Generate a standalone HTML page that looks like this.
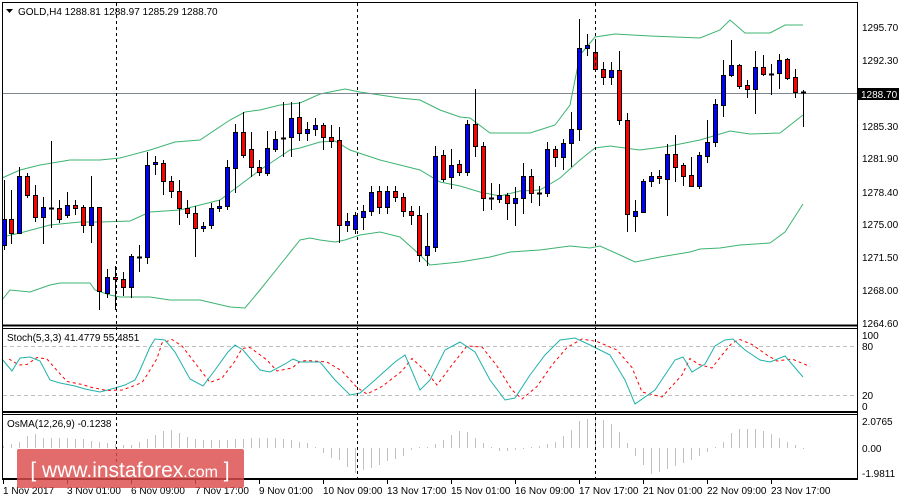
<!DOCTYPE html>
<html><head><meta charset="utf-8">
<style>
html,body{margin:0;padding:0;background:#fff;width:900px;height:500px;overflow:hidden}
svg{display:block;font-family:"Liberation Sans","DejaVu Sans",sans-serif}
</style></head>
<body>
<svg id="s" width="900" height="500" viewBox="0 0 900 500" xmlns="http://www.w3.org/2000/svg">
<rect width="900" height="500" fill="#fff"/>
<g id="bands" fill="none" stroke="#3cb371" stroke-width="1">
<polyline points="2,178 20,170 40,165 70,160 100,160 120,158 150,150 175,142 200,140 230,120 245,112 260,110 280,105 300,103 320,94 345,89 360,92 380,95 400,98 420,100 440,110 460,117 470,118 490,133 510,133 530,133 555,125 570,105 580,55 595,37 615,34 650,36 700,38 720,30 730,20 745,33 770,33 785,25 803,25"/>
<polyline points="2,237 20,233 50,225 80,222 100,222 130,221 150,212 180,210 220,200 240,185 260,170 275,160 290,150 300,148 320,142 335,141 350,150 380,160 400,165 420,170 440,182 460,186 480,192 500,196 520,191 540,190 560,178 580,160 595,148 610,146 640,150 670,146 700,140 730,131 750,134 780,133 803,115"/>
<polyline points="2,300 10,290 30,292 50,285 60,283 90,283 95,290 110,295 120,297 150,297 170,300 200,300 230,307 245,308 260,290 280,265 300,240 310,238 320,240 335,242 345,240 360,235 380,232 400,237 420,255 430,265 460,262 490,257 510,252 540,250 570,246 590,248 600,246 620,255 635,262 660,257 690,252 700,249 720,248 740,245 770,243 785,232 803,204"/>
</g>
<line x1="2" y1="93.5" x2="857" y2="93.5" stroke="#808890" stroke-width="1"/>
<g id="candles"></g>
<g id="stoch" fill="none">
<line x1="3" y1="346.5" x2="857" y2="346.5" stroke="#c0c0c0" stroke-dasharray="4,3"/>
<line x1="3" y1="395.5" x2="857" y2="395.5" stroke="#c0c0c0" stroke-dasharray="4,3"/>
<polyline id="sig" stroke="#ff0000" stroke-dasharray="3,3" points=""/>
<polyline id="main" stroke="#20b2aa" points="2,359 12,371 20,358 30,357 40,361 50,380 60,383 75,386 85,389 100,392 115,388 125,385 135,380 140,370 150,347 155,339 165,340 175,352 190,379 203,386 215,370 228,352 235,345 243,350 260,370 270,372 285,364 293,359 300,362 320,362 335,380 350,395 360,393 375,380 395,362 405,355 420,390 430,380 445,350 460,342 475,352 490,380 505,400 515,398 530,375 545,355 560,340 575,338 590,345 610,355 625,380 635,404 655,390 675,360 683,357 692,372 705,364 715,346 725,340 733,339 745,350 760,360 770,362 785,356 803,377"/>
</g>
<g id="osma" stroke="#c0c0c0" stroke-width="1"></g>
<g stroke="#000" fill="none" stroke-width="1">
<line x1="2.5" y1="2" x2="2.5" y2="479"/>
<line x1="857.5" y1="2" x2="857.5" y2="479"/>
<line x1="2" y1="2.5" x2="858" y2="2.5"/>
<line x1="2" y1="325.5" x2="858" y2="325.5" stroke-width="2"/>
<line x1="2" y1="328.5" x2="858" y2="328.5"/>
<line x1="2" y1="412" x2="858" y2="412" stroke-width="2"/>
<line x1="2" y1="414.5" x2="858" y2="414.5"/>
<line x1="2" y1="479" x2="858" y2="479" stroke-width="2"/>
</g>
<g stroke="#000" stroke-dasharray="3,3">
<line x1="116.5" y1="3" x2="116.5" y2="479"/>
<line x1="357.5" y1="3" x2="357.5" y2="479"/>
<line x1="595.5" y1="3" x2="595.5" y2="479"/>
</g>
<g font-size="10" fill="#000">
<path d="M6 9 L13 9 L9.5 13 Z" fill="#000"/>
<text x="18" y="15">GOLD,H4  1288.81 1288.97 1285.29 1288.70</text>
<text x="7" y="341">Stoch(5,3,3) 41.4779 55.4851</text>
<text x="7" y="427">OsMA(12,26,9) -0.1238</text>
</g>
<g font-size="10" fill="#000" id="ylab">
<text x="862" y="31">1295.70</text>
<text x="862" y="64">1292.30</text>
<rect x="858" y="88" width="41" height="12" fill="#000"/>
<text x="861" y="98" fill="#fff">1288.70</text>
<text x="862" y="130">1285.30</text>
<text x="862" y="162">1281.90</text>
<text x="862" y="196">1278.40</text>
<text x="862" y="228">1275.00</text>
<text x="862" y="261">1271.50</text>
<text x="862" y="294">1268.00</text>
<text x="862" y="327">1264.60</text>
<text x="862" y="339">100</text>
<text x="862" y="350">80</text>
<text x="862" y="399">20</text>
<text x="862" y="410">0</text>
<text x="862" y="425">2.0765</text>
<text x="862" y="452">0.00</text>
<text x="862" y="477">-1.9811</text>
</g>
<g id="xlab" font-size="10" fill="#000"></g>
<rect x="17" y="449" width="227" height="39" rx="2" fill="#dc4b4b" fill-opacity="0.82"/>
<text x="130" y="477" text-anchor="middle" font-size="21" fill="#fff">[  www.instaforex<tspan font-size="16">.com</tspan> ]</text>
</svg>
<script>
var NS="http://www.w3.org/2000/svg";
function el(p,t,a){var e=document.createElementNS(NS,t);for(var k in a)e.setAttribute(k,a[k]);p.appendChild(e);return e;}
var C=[[4,'b',219,245,180,250],[11,'r',219,233,190,244],[19,'b',176,233,167,234],[27,'r',176,195,173,198],[35,'r',195,217,185,222],[43,'b',207,217,197,244],[51,'d',208,208,141,228],[59,'r',208,219,200,223],[67,'b',205,215,192,218],[75,'r',205,208,200,215],[83,'r',207,225,205,233],[91,'b',207,225,176,243],[99,'r',207,291,207,310],[107,'b',277,293,269,298],[115,'r',277,279,266,310],[123,'r',279,287,272,296],[131,'b',256,287,254,298],[139,'d',257,257,245,272],[147,'b',165,257,152,264],[155,'b',162,164,156,175],[163,'r',163,181,160,195],[171,'r',181,191,176,198],[179,'r',191,208,180,225],[187,'r',208,213,200,218],[195,'r',213,228,206,257],[203,'b',226,228,222,232],[211,'b',208,225,203,229],[219,'b',206,208,200,212],[227,'b',167,206,160,210],[235,'b',132,168,124,193],[243,'r',132,155,112,158],[251,'r',149,167,132,177],[259,'r',167,172,160,176],[267,'b',148,173,131,176],[275,'b',139,149,131,152],[283,'d',138,138,102,157],[291,'b',118,137,102,157],[299,'r',117,133,102,141],[307,'b',129,133,122,141],[315,'b',125,129,118,136],[323,'r',125,137,123,150],[331,'r',137,141,125,148],[339,'r',140,225,127,243],[347,'b',221,225,213,232],[355,'b',215,229,212,234],[363,'b',211,217,205,230],[371,'b',192,211,186,216],[379,'r',191,207,186,214],[387,'b',191,207,186,214],[395,'r',191,197,186,202],[403,'r',197,211,193,217],[411,'r',211,215,206,225],[419,'r',215,255,206,262],[427,'b',246,255,213,266],[435,'b',156,247,146,252],[443,'r',155,179,150,182],[451,'b',165,177,149,189],[459,'r',164,172,160,176],[467,'b',124,172,120,176],[475,'r',124,146,89,157],[483,'r',146,198,142,211],[491,'d',198,198,183,210],[499,'b',195,199,184,203],[507,'r',195,203,193,220],[515,'b',198,203,187,226],[523,'b',176,198,163,214],[531,'r',176,193,169,203],[539,'d',193,193,186,206],[547,'b',149,193,142,197],[555,'r',149,157,146,167],[563,'b',143,157,139,170],[571,'b',129,143,112,167],[579,'b',48,129,19,141],[587,'b',45,48,34,56],[595,'r',52,69,39,72],[603,'r',69,77,62,85],[611,'b',70,77,62,85],[619,'r',70,120,51,125],[627,'r',120,214,113,232],[635,'b',211,216,200,232],[643,'b',181,212,179,213],[651,'b',176,181,172,187],[659,'r',176,178,170,184],[667,'b',154,179,144,216],[675,'r',154,167,135,182],[683,'r',165,176,163,186],[691,'r',175,186,157,187],[699,'b',155,186,152,189],[707,'b',142,156,120,163],[715,'b',104,142,99,147],[723,'b',75,105,60,117],[731,'b',65,75,40,77],[739,'r',65,86,64,89],[747,'r',85,89,80,98],[755,'b',67,89,51,114],[763,'r',67,74,55,76],[771,'d',74,74,64,95],[779,'b',60,73,54,89],[787,'r',59,78,58,80],[795,'r',77,92,69,98],[803,'d',92,92,90,127]];
var g=document.getElementById('candles');
C.forEach(function(c){var x=c[0];
el(g,'line',{x1:x+.5,y1:c[4],x2:x+.5,y2:c[5],stroke:'#000'});
if(c[1]=='d'){el(g,'line',{x1:x-2,y1:c[2]+.5,x2:x+3,y2:c[2]+.5,stroke:'#000','stroke-width':2});}
else el(g,'rect',{x:x-2+.5,y:c[2]+.5,width:4,height:Math.max(2,c[3]-c[2]),fill:c[1]=='b'?'#0000ff':'#ff0000',stroke:'#000'});
});
var m=document.getElementById('main').getAttribute('points').trim().split(' ').map(function(p){return p.split(',').map(Number)});
var sp=[];for(var i=0;i<m.length;i++){var a=m[i],b=m[Math.max(0,i-1)];sp.push((a[0]+7)+','+((a[1]+b[1])/2));}
document.getElementById('sig').setAttribute('points',sp.join(' '));
var K=[[6,3],[19,6],[27,12],[35,14],[43,10],[60,10],[80,9],[100,6],[115,4],[130,3],[150,10],[163,17],[172,18],[185,12],[200,8],[230,8],[250,10],[270,10],[290,8],[310,4],[320,-3],[330,-10],[340,-12],[347,-19],[355,-25],[363,-22],[371,-20],[385,-14],[400,-10],[410,-2],[430,2],[443,8],[459,17],[467,16],[475,10],[490,1],[500,-3],[520,-2],[540,2],[555,6],[571,18],[580,28],[595,30],[605,27],[615,22],[628,4],[636,-10],[644,-18],[651,-26],[660,-24],[680,-16],[700,-8],[712,-2],[722,5],[730,14],[740,20],[760,18],[775,12],[788,6],[798,2],[803,-1]];
function f(x){for(var i=1;i<K.length;i++){if(x<=K[i][0]){var a=K[i-1],b=K[i];return a[1]+(b[1]-a[1])*(x-a[0])/(b[0]-a[0]);}}return 0;}
var o=document.getElementById('osma');
for(var x=3;x<=803;x+=8){var v=Math.round(f(x));if(v==0)v=1;el(o,'line',{x1:x+.5,y1:448,x2:x+.5,y2:448-v});}
var L=[[2,'1 Nov 2017'],[66,'3 Nov 01:00'],[130,'6 Nov 09:00'],[194,'7 Nov 17:00'],[258,'9 Nov 01:00'],[322,'10 Nov 09:00'],[386,'13 Nov 17:00'],[450,'15 Nov 01:00'],[514,'16 Nov 09:00'],[578,'17 Nov 17:00'],[642,'21 Nov 01:00'],[706,'22 Nov 09:00'],[770,'23 Nov 17:00']];
var xl=document.getElementById('xlab');
L.forEach(function(l){el(xl,'line',{x1:l[0]+1.5,y1:479,x2:l[0]+1.5,y2:484,stroke:'#000'});var t=el(xl,'text',{x:l[0]+1,y:494});t.textContent=l[1];});
</script>
</body></html>
